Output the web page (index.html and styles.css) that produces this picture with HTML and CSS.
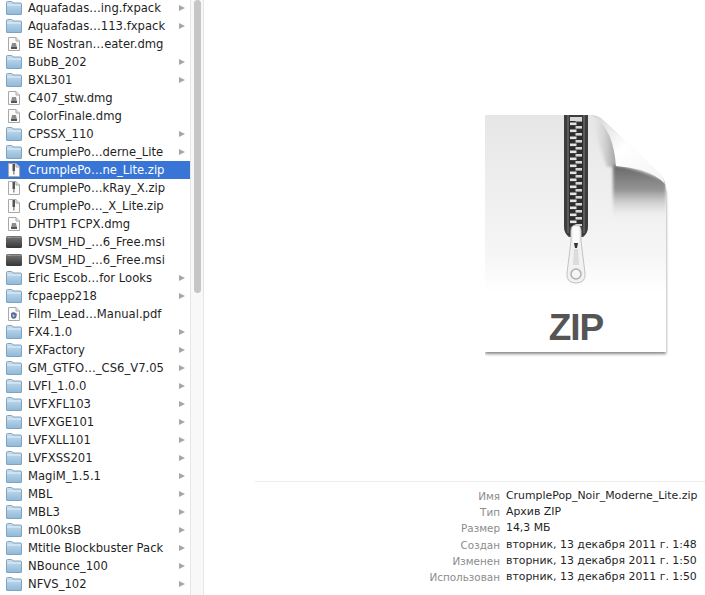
FILE: index.html
```html
<!DOCTYPE html>
<html lang="ru">
<head>
    <meta charset="UTF-8">
    <meta name="viewport" content="width=device-width, initial-scale=1.0">
    <title>CrumplePop_Noir_Moderne_Lite.zip</title>
    <link rel="stylesheet" href="styles.css">
</head>
<body>
    <!-- icones de la liste -->
    <svg class="defs" width="0" height="0">
        <defs>
            <linearGradient id="folderFill" x1="0" y1="0" x2="0" y2="1">
                <stop offset="0" stop-color="#c9dfef"/>
                <stop offset="1" stop-color="#8fb8d8"/>
            </linearGradient>
            <linearGradient id="driveFill" x1="0" y1="0" x2="0" y2="1">
                <stop offset="0" stop-color="#777777"/>
                <stop offset="1" stop-color="#353535"/>
            </linearGradient>
            <linearGradient id="paperFill" x1="0" y1="0" x2="0" y2="1">
                <stop offset="0" stop-color="#e6e6e6"/>
                <stop offset="0.6" stop-color="#f6f6f6"/>
                <stop offset="0.75" stop-color="#ffffff"/>
            </linearGradient>
            <linearGradient id="flapShadow" x1="0" y1="0" x2="0" y2="1">
                <stop offset="0" stop-color="#666666"/>
                <stop offset="0.45" stop-color="#8a8a8a" stop-opacity="0.9"/>
                <stop offset="1" stop-color="#f1f1f1" stop-opacity="0"/>
            </linearGradient>
            <linearGradient id="curlShadow" x1="0" y1="0" x2="1" y2="0">
                <stop offset="0" stop-color="#e9e9e9" stop-opacity="0"/>
                <stop offset="1" stop-color="#9c9c9c"/>
            </linearGradient>
            <linearGradient id="flapFill" x1="0" y1="0" x2="1" y2="1">
                <stop offset="0" stop-color="#d4d4d4"/>
                <stop offset="0.45" stop-color="#ffffff"/>
                <stop offset="1" stop-color="#f4f4f4"/>
            </linearGradient>
            <pattern id="teeth" width="14" height="7" patternUnits="userSpaceOnUse">
                <rect width="14" height="7" fill="#2d2d2d"/>
                <rect x="1" y="0.5" width="6.5" height="2.6" fill="#e4e4e4"/>
                <rect x="6.5" y="4" width="6.5" height="2.6" fill="#d6d6d6"/>
            </pattern>
            <symbol id="folder" viewBox="0 0 16 14">
                <path d="M0.5 13V1.5Q0.5 0.5 1.5 0.5H5.5Q6.5 0.5 7 2H14.5Q15.5 2 15.5 3V13Q15.5 13.5 15 13.5H1Q0.5 13.5 0.5 13Z" fill="url(#folderFill)" stroke="#7ea4c2"/>
                <path d="M1 4H15" stroke="#e4f0f8"/>
            </symbol>
            <symbol id="doc" viewBox="0 0 12 14">
                <path d="M0.5 0.5H8L11.5 4V13.5H0.5Z" fill="#fbfbfb" stroke="#a8a8a8"/>
                <path d="M8 0.5V4H11.5" fill="#e2e2e2" stroke="#a8a8a8"/>
            </symbol>
            <symbol id="dmg" viewBox="0 0 12 14">
                <use href="#doc" width="12" height="14"/>
                <path d="M4 6H8L9 11H3Z" fill="#8d8d8d"/>
                <rect x="3" y="10" width="6" height="2" fill="#555"/>
            </symbol>
            <symbol id="zipdoc" viewBox="0 0 12 14">
                <use href="#doc" width="12" height="14"/>
                <rect x="4.5" y="1" width="2.5" height="7" fill="#555"/>
                <rect x="5" y="8" width="1.6" height="3.5" fill="#9a9a9a"/>
            </symbol>
            <symbol id="pdf" viewBox="0 0 12 14">
                <use href="#doc" width="12" height="14"/>
                <path d="M3 6L6 5L9 7L8 11L5 12L3 10Z" fill="#5c6f9c"/>
                <path d="M4.5 7L7 9L5 10Z" fill="#d8d8e4"/>
            </symbol>
            <symbol id="drive" viewBox="0 0 16 14">
                <rect x="0" y="1" width="16" height="12" rx="1.5" fill="url(#driveFill)"/>
                <rect x="1" y="2" width="14" height="1" fill="#8c8c8c"/>
                <rect x="2" y="2" width="2" height="1" fill="#7fc07f"/>
            </symbol>
        </defs>
    </svg>

    <div class="window">
        <ul class="files">
            <li class="file"><svg class="ico"><use href="#folder"/></svg><span class="name">Aquafadas…ing.fxpack</span><i class="arrow"></i></li>
            <li class="file"><svg class="ico"><use href="#folder"/></svg><span class="name">Aquafadas…113.fxpack</span><i class="arrow"></i></li>
            <li class="file"><svg class="ico"><use href="#dmg" x="2" width="12"/></svg><span class="name">BE Nostran…eater.dmg</span></li>
            <li class="file"><svg class="ico"><use href="#folder"/></svg><span class="name">BubB_202</span><i class="arrow"></i></li>
            <li class="file"><svg class="ico"><use href="#folder"/></svg><span class="name">BXL301</span><i class="arrow"></i></li>
            <li class="file"><svg class="ico"><use href="#dmg" x="2" width="12"/></svg><span class="name">C407_stw.dmg</span></li>
            <li class="file"><svg class="ico"><use href="#dmg" x="2" width="12"/></svg><span class="name">ColorFinale.dmg</span></li>
            <li class="file"><svg class="ico"><use href="#folder"/></svg><span class="name">CPSSX_110</span><i class="arrow"></i></li>
            <li class="file"><svg class="ico"><use href="#folder"/></svg><span class="name">CrumplePo…derne_Lite</span><i class="arrow"></i></li>
            <li class="file selected"><svg class="ico"><use href="#zipdoc" x="2" width="12"/></svg><span class="name">CrumplePo…ne_Lite.zip</span></li>
            <li class="file"><svg class="ico"><use href="#zipdoc" x="2" width="12"/></svg><span class="name">CrumplePo…kRay_X.zip</span></li>
            <li class="file"><svg class="ico"><use href="#zipdoc" x="2" width="12"/></svg><span class="name">CrumplePo…_X_Lite.zip</span></li>
            <li class="file"><svg class="ico"><use href="#dmg" x="2" width="12"/></svg><span class="name">DHTP1 FCPX.dmg</span></li>
            <li class="file"><svg class="ico"><use href="#drive"/></svg><span class="name">DVSM_HD_…6_Free.msi</span></li>
            <li class="file"><svg class="ico"><use href="#drive"/></svg><span class="name">DVSM_HD_…6_Free.msi</span></li>
            <li class="file"><svg class="ico"><use href="#folder"/></svg><span class="name">Eric Escob…for Looks</span><i class="arrow"></i></li>
            <li class="file"><svg class="ico"><use href="#folder"/></svg><span class="name">fcpaepp218</span><i class="arrow"></i></li>
            <li class="file"><svg class="ico"><use href="#pdf" x="2" width="12"/></svg><span class="name">Film_Lead…Manual.pdf</span></li>
            <li class="file"><svg class="ico"><use href="#folder"/></svg><span class="name">FX4.1.0</span><i class="arrow"></i></li>
            <li class="file"><svg class="ico"><use href="#folder"/></svg><span class="name">FXFactory</span><i class="arrow"></i></li>
            <li class="file"><svg class="ico"><use href="#folder"/></svg><span class="name">GM_GTFO…_CS6_V7.05</span><i class="arrow"></i></li>
            <li class="file"><svg class="ico"><use href="#folder"/></svg><span class="name">LVFI_1.0.0</span><i class="arrow"></i></li>
            <li class="file"><svg class="ico"><use href="#folder"/></svg><span class="name">LVFXFL103</span><i class="arrow"></i></li>
            <li class="file"><svg class="ico"><use href="#folder"/></svg><span class="name">LVFXGE101</span><i class="arrow"></i></li>
            <li class="file"><svg class="ico"><use href="#folder"/></svg><span class="name">LVFXLL101</span><i class="arrow"></i></li>
            <li class="file"><svg class="ico"><use href="#folder"/></svg><span class="name">LVFXSS201</span><i class="arrow"></i></li>
            <li class="file"><svg class="ico"><use href="#folder"/></svg><span class="name">MagiM_1.5.1</span><i class="arrow"></i></li>
            <li class="file"><svg class="ico"><use href="#folder"/></svg><span class="name">MBL</span><i class="arrow"></i></li>
            <li class="file"><svg class="ico"><use href="#folder"/></svg><span class="name">MBL3</span><i class="arrow"></i></li>
            <li class="file"><svg class="ico"><use href="#folder"/></svg><span class="name">mL00ksB</span><i class="arrow"></i></li>
            <li class="file"><svg class="ico"><use href="#folder"/></svg><span class="name">Mtitle Blockbuster Pack</span><i class="arrow"></i></li>
            <li class="file"><svg class="ico"><use href="#folder"/></svg><span class="name">NBounce_100</span><i class="arrow"></i></li>
            <li class="file"><svg class="ico"><use href="#folder"/></svg><span class="name">NFVS_102</span><i class="arrow"></i></li>
            <li class="file"><svg class="ico"><use href="#doc" x="2" width="12"/></svg></li>
        </ul>

        <div class="scrollbar"><div class="thumb"></div></div>

        <div class="preview">
            <div class="bigicon">
                <svg width="200" height="250" viewBox="0 0 200 250">
                    <defs>
                        <filter id="dropShadow" x="-10%" y="-10%" width="120%" height="120%">
                            <feGaussianBlur stdDeviation="1.5"/>
                        </filter>
                        <filter id="soft" x="-30%" y="-30%" width="160%" height="160%">
                            <feGaussianBlur stdDeviation="1.5"/>
                        </filter>
                        <clipPath id="pageClip">
                            <path d="M0 0H106Q114 0 119 6L176 60Q181 66 181 76V237H0Z"/>
                        </clipPath>
                    </defs>
                    <!-- ombre -->
                    <path d="M0 2H106L181 76V239H0Z" fill="#555" opacity="0.7" filter="url(#dropShadow)"/>
                    <!-- page -->
                    <path d="M0 0H106Q114 0 119 6L176 60Q181 66 181 76V237H0Z" fill="url(#paperFill)"/>
                    <g clip-path="url(#pageClip)">
                        <path d="M104 0H132V52H122Z" fill="url(#curlShadow)" filter="url(#soft)"/>
                        <path d="M128 50Q150 52 181 66V106H128Z" fill="url(#flapShadow)" filter="url(#soft)"/>
                        <!-- zip -->
                        <path d="M79 0H103V112Q103 118 98 122H84Q79 118 79 112Z" fill="#3d3d3d"/>
                        <rect x="82" y="0" width="2" height="118" fill="#5a5a5a"/>
                        <rect x="98" y="0" width="2" height="118" fill="#5a5a5a"/>
                        <rect x="85" y="2" width="12" height="4" fill="#d8d8d8"/>
                        <rect x="84" y="6" width="14" height="105" fill="url(#teeth)"/>
                    </g>
                    <!-- rabat -->
                    <path d="M106 0Q114 0 119 6L176 60Q179 64 180 69Q172 60 156 55Q144 52 131 51Q130 36 125 22Q118 6 106 0Z" fill="url(#flapFill)"/>
                    <!-- tirette -->
                    <path d="M86 116Q86 110 91 110Q96 110 96 116V126L100 158Q101 168 91 168Q81 168 82 158L86 126Z" fill="#f1f1f1" stroke="#c2c2c2"/>
                    <rect x="88" y="112" width="6" height="16" fill="#fbfbfb"/>
                    <path d="M89 128H93L92 133H90Z" fill="#333"/>
                    <path d="M89 134H93L94 150H88Z" fill="#dcdcdc"/>
                    <circle cx="91" cy="159" r="5" fill="#f6f6f6" stroke="#b0b0b0" stroke-width="1.5"/>
                    <text class="ziplabel" x="91" y="225" text-anchor="middle">ZIP</text>
                </svg>
            </div>

            <div class="info">
                <div class="info-row"><span class="label">Имя</span><span class="value">CrumplePop_Noir_Moderne_Lite.zip</span></div>
                <div class="info-row"><span class="label">Тип</span><span class="value">Архив ZIP</span></div>
                <div class="info-row"><span class="label">Размер</span><span class="value">14,3 МБ</span></div>
                <div class="info-row"><span class="label">Создан</span><span class="value">вторник, 13 декабря 2011 г. 1:48</span></div>
                <div class="info-row"><span class="label">Изменен</span><span class="value">вторник, 13 декабря 2011 г. 1:50</span></div>
                <div class="info-row"><span class="label">Использован</span><span class="value">вторник, 13 декабря 2011 г. 1:50</span></div>
            </div>
        </div>
    </div>
</body>
</html>
```

FILE: styles.css
```css
html, body {
    margin: 0;
    height: 100%;
    overflow: hidden;
    background-color: white;
}
body {
    font-family: "DejaVu Sans", Verdana, sans-serif;
    font-size: 11px;
    color: #1f1f1f;
}
.defs {
    display: block;
    height: 0;
}
.window {
    display: flex;
    height: 595px;
    overflow: hidden;
}

/* colonne de fichiers */
.files {
    flex: none;
    width: 190px;
    margin: -1px 0 0 0;
    padding: 0;
    list-style: none;
}
.file {
    display: flex;
    align-items: center;
    height: 18px;
    padding-left: 6px;
    padding-right: 5px;
    font-size: 11.6px;
    white-space: nowrap;
}
.file.selected {
    background-color: #3875d7;
    color: white;
}
.ico {
    flex: none;
    width: 16px;
    height: 14px;
    margin-right: 6px;
}
.name {
    flex: 1;
    margin-top: -1px;
}
.arrow {
    flex: none;
    width: 0;
    height: 0;
    border-left: 6px solid #a6a6a6;
    border-top: 3.5px solid transparent;
    border-bottom: 3.5px solid transparent;
}

/* ascenseur */
.scrollbar {
    flex: none;
    width: 14px;
    border-left: 1px solid #e6e6e6;
    border-right: 1px solid #e6e6e6;
    background-color: #f8f8f8;
    box-sizing: border-box;
    padding: 0 2px 0 3px;
}
.thumb {
    height: 293px;
    background-color: #c6c6c6;
    border-radius: 5px;
}

/* apercu */
.preview {
    flex: 1;
    display: flex;
    flex-direction: column;
    padding-left: 51px;
}
.bigicon {
    box-sizing: border-box;
    height: 481px;
    padding-top: 115px;
    padding-left: 230px;
}
.bigicon svg {
    display: block;
}
.ziplabel {
    font-family: "Liberation Sans", Arial, sans-serif;
    font-weight: bold;
    font-size: 37px;
    letter-spacing: -1px;
    fill: #555555;
}
.info {
    border-top: 1px solid #ececec;
    padding-top: 6px;
}
.info-row {
    display: flex;
    height: 16.2px;
    line-height: 16px;
}
.label {
    flex: none;
    width: 245px;
    font-size: 10.4px;
    text-align: right;
    color: #8c8c8c;
}
.value {
    margin-left: 6px;
    font-size: 10.9px;
    white-space: nowrap;
}
```
